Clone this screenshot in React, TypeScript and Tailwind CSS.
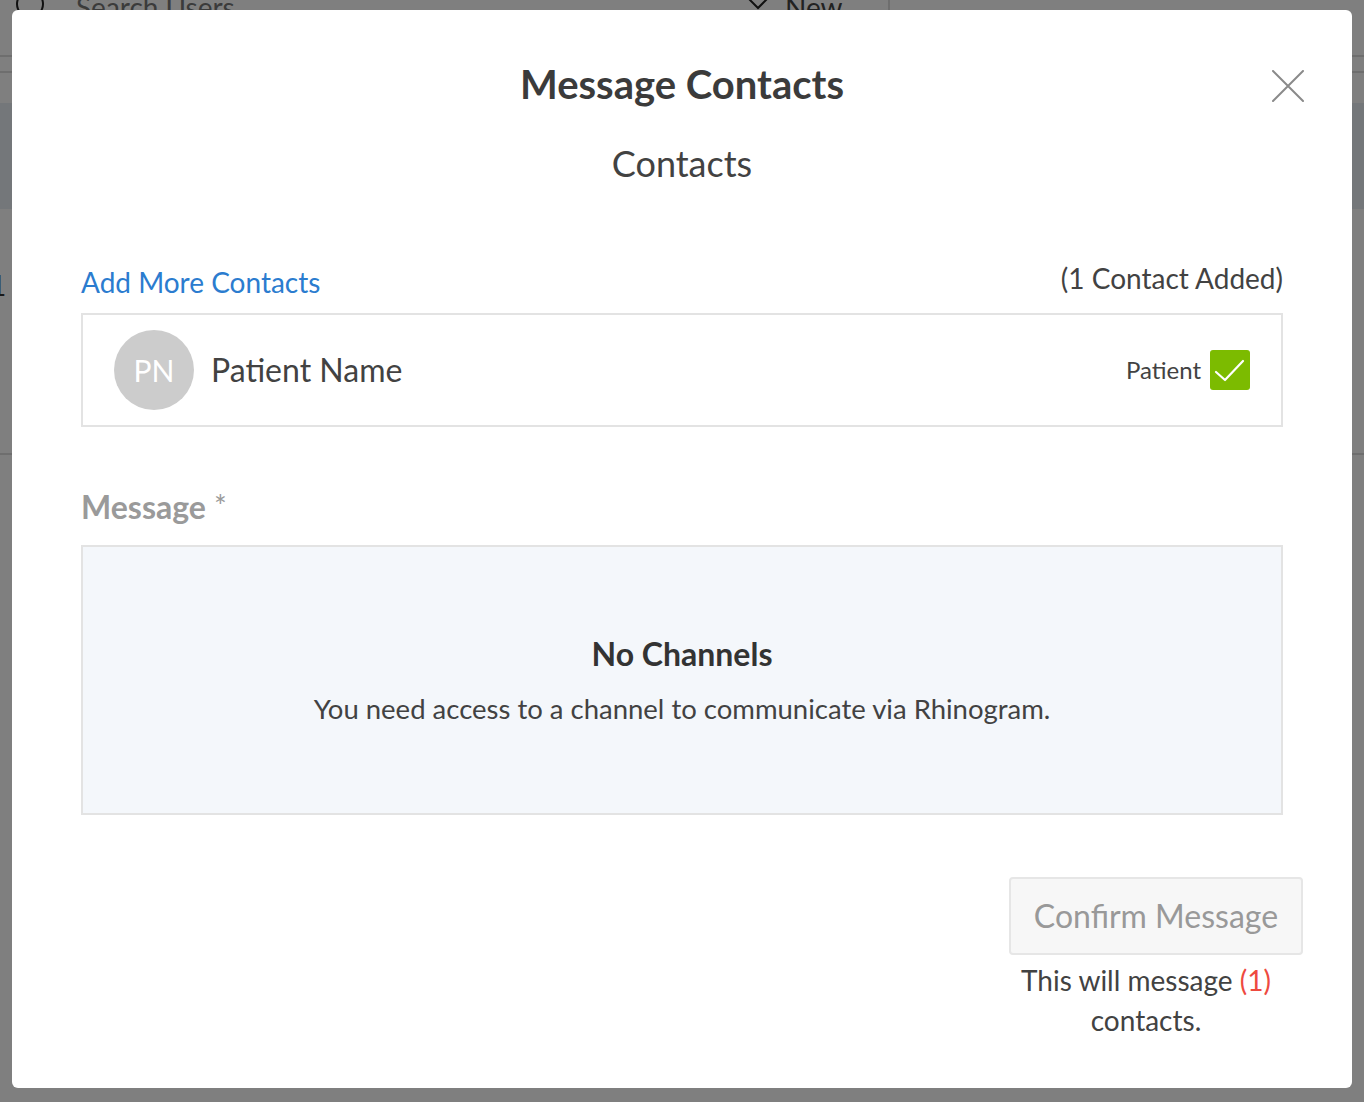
function BackgroundPage() {
  // the app page that sits behind the modal overlay
  return (
    <div className="flex h-full flex-col text-[#333]">
      <div className="flex h-[57px] items-start border-b-2 border-[#ddd]">
        <div className="-mt-[10px] ml-[16px] h-[28px] w-[28px] rounded-full border-2 border-[#222]" />
        <span className="-mt-[14px] ml-[32px] text-[28px] text-[#777]">Search Users</span>
        <div className="ml-auto flex w-[476px] items-start border-r-2 border-[#ddd]">
          <svg width="36" height="20" viewBox="0 0 36 20" className="-mt-[10px] ml-[326px]">
            <path d="M2 2 L18 18 L34 2" fill="none" stroke="#222" strokeWidth="2" />
          </svg>
          <span className="-mt-[14px] ml-[9px] h-[57px] text-[28px] text-[#444]">New</span>
        </div>
        <div className="w-[474px]" />
      </div>
      <div className="h-[16px] border-b-2 border-[#ddd]" />
      <div className="mt-[30px] h-[106px] bg-[#e8eef5]" />
      <div className="mt-[58px] text-[28px] leading-[36px]">
        <span className="-ml-[10px]">1</span>
      </div>
      <div className="mt-[150px] border-b-2 border-[#ddd]" />
    </div>
  );
}

export default function App() {
  return (
    <div className="relative h-[1102px] w-[1364px] overflow-hidden bg-white font-['Lato',sans-serif]">
      <BackgroundPage />
      <div className="absolute inset-0 bg-black/50" />

      <div className="absolute left-[12px] top-[10px] h-[1078px] w-[1340px] rounded-[6px] bg-white px-[69px] pt-[50px]">
        <div className="relative">
          <h1 className="text-center text-[40px] font-bold leading-[48px] text-[#3b3b3b]">
            Message Contacts
          </h1>
          <button className="absolute -right-[21px] top-[10px]">
            <svg width="32" height="32" viewBox="0 0 32 32">
              <path d="M1 1 L31 31 M31 1 L1 31" stroke="#8a8a8a" strokeWidth="2" strokeLinecap="round" />
            </svg>
          </button>
        </div>

        <h2 className="mt-[33px] text-center text-[36px] leading-[44px] text-[#424242]">Contacts</h2>

        <div className="mt-[79px] flex items-end justify-between">
          <span className="text-[28px] leading-[36px] text-[#2b7ccf]">Add More Contacts</span>
          <span className="relative -top-[4px] text-[28px] leading-[36px] text-[#424242]">(1 Contact Added)</span>
        </div>

        <div className="mt-[13px] flex h-[114px] items-center border-2 border-[#e3e3e3] px-[31px]">
          <div className="flex h-[80px] w-[80px] items-center justify-center rounded-full bg-[#cccccc] text-[30px] text-white">
            PN
          </div>
          <span className="ml-[17px] text-[32px] text-[#424242]">Patient Name</span>
          <span className="ml-auto text-[24px] text-[#424242]">Patient</span>
          <div className="ml-[9px] flex h-[40px] w-[40px] items-center justify-center rounded-[3px] bg-[#7cbb00]">
            <svg width="40" height="40" viewBox="0 0 40 40">
              <path d="M6 22 L15 30 L33 11" fill="none" stroke="#fff" strokeWidth="2.2" strokeLinecap="round" strokeLinejoin="round" />
            </svg>
          </div>
        </div>

        <div className="mt-[60px] text-[32px] leading-[40px] text-[#9a9a9a]">
          <span className="font-bold">Message</span>{" "}
          <span className="relative -top-[2px] text-[30px]">*</span>
        </div>

        <div className="mt-[18px] flex h-[270px] flex-col items-center justify-center border-2 border-[#e3e3e3] bg-[#f4f7fb]">
          <p className="text-[32px] font-bold leading-[40px] text-[#333]">No Channels</p>
          <p className="mt-[17px] text-[27.5px] leading-[36px] text-[#424242]">
            You need access to a channel to communicate via Rhinogram.
          </p>
        </div>

        <div className="-mr-[20px] mt-[62px] flex flex-col items-end">
          <button className="h-[78px] w-[294px] rounded-[4px] border-2 border-[#e6e6e6] bg-[#f7f7f7] text-[32px] text-[#999]">
            Confirm Message
          </button>
          <p className="mt-[5px] w-[294px] pr-[20px] text-center text-[28px] leading-[40px] text-[#424242]">
            This will message <span className="text-[#ee4a3f]">(1)</span> contacts.
          </p>
        </div>
      </div>
    </div>
  );
}
